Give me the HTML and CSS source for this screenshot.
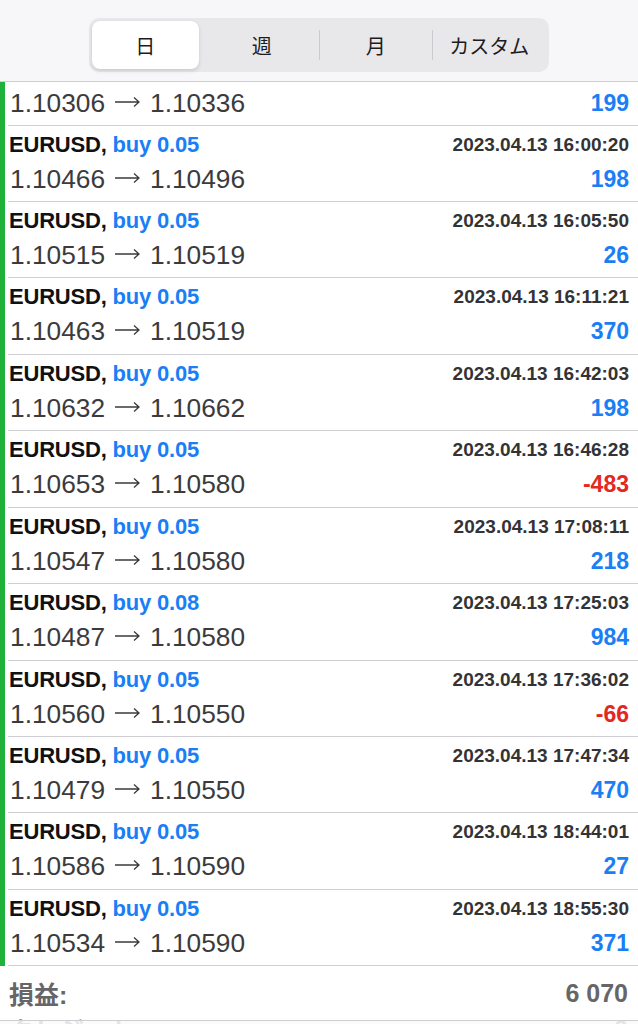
FILE: index.html
```html
<!DOCTYPE html>
<html lang="ja">
<head>
<meta charset="utf-8">
<link rel="stylesheet" href="styles.css">
</head>
<body>
<header class="top">
  <div class="seg">
    <div class="seg-item active">日</div>
    <div class="seg-item">週</div>
    <div class="seg-item sep">月</div>
    <div class="seg-item sep">カスタム</div>
  </div>
</header>
<ul class="deals">
  <li class="deal partial">
    <div class="line2"><span class="price">1.10306<svg class="arr" viewBox="0 0 25 12" width="25" height="12"><path d="M0 6H24M19 1.5L24 6L19 10.5"/></svg>1.10336</span><span class="pl">199</span></div>
  </li>
  <li class="deal">
    <div class="line1"><span class="sym">EURUSD, <span class="side">buy 0.05</span></span><span class="time">2023.04.13 16:00:20</span></div>
    <div class="line2"><span class="price">1.10466<svg class="arr" viewBox="0 0 25 12" width="25" height="12"><path d="M0 6H24M19 1.5L24 6L19 10.5"/></svg>1.10496</span><span class="pl">198</span></div>
  </li>
  <li class="deal">
    <div class="line1"><span class="sym">EURUSD, <span class="side">buy 0.05</span></span><span class="time">2023.04.13 16:05:50</span></div>
    <div class="line2"><span class="price">1.10515<svg class="arr" viewBox="0 0 25 12" width="25" height="12"><path d="M0 6H24M19 1.5L24 6L19 10.5"/></svg>1.10519</span><span class="pl">26</span></div>
  </li>
  <li class="deal">
    <div class="line1"><span class="sym">EURUSD, <span class="side">buy 0.05</span></span><span class="time">2023.04.13 16:11:21</span></div>
    <div class="line2"><span class="price">1.10463<svg class="arr" viewBox="0 0 25 12" width="25" height="12"><path d="M0 6H24M19 1.5L24 6L19 10.5"/></svg>1.10519</span><span class="pl">370</span></div>
  </li>
  <li class="deal">
    <div class="line1"><span class="sym">EURUSD, <span class="side">buy 0.05</span></span><span class="time">2023.04.13 16:42:03</span></div>
    <div class="line2"><span class="price">1.10632<svg class="arr" viewBox="0 0 25 12" width="25" height="12"><path d="M0 6H24M19 1.5L24 6L19 10.5"/></svg>1.10662</span><span class="pl">198</span></div>
  </li>
  <li class="deal">
    <div class="line1"><span class="sym">EURUSD, <span class="side">buy 0.05</span></span><span class="time">2023.04.13 16:46:28</span></div>
    <div class="line2"><span class="price">1.10653<svg class="arr" viewBox="0 0 25 12" width="25" height="12"><path d="M0 6H24M19 1.5L24 6L19 10.5"/></svg>1.10580</span><span class="pl loss">-483</span></div>
  </li>
  <li class="deal">
    <div class="line1"><span class="sym">EURUSD, <span class="side">buy 0.05</span></span><span class="time">2023.04.13 17:08:11</span></div>
    <div class="line2"><span class="price">1.10547<svg class="arr" viewBox="0 0 25 12" width="25" height="12"><path d="M0 6H24M19 1.5L24 6L19 10.5"/></svg>1.10580</span><span class="pl">218</span></div>
  </li>
  <li class="deal">
    <div class="line1"><span class="sym">EURUSD, <span class="side">buy 0.08</span></span><span class="time">2023.04.13 17:25:03</span></div>
    <div class="line2"><span class="price">1.10487<svg class="arr" viewBox="0 0 25 12" width="25" height="12"><path d="M0 6H24M19 1.5L24 6L19 10.5"/></svg>1.10580</span><span class="pl">984</span></div>
  </li>
  <li class="deal">
    <div class="line1"><span class="sym">EURUSD, <span class="side">buy 0.05</span></span><span class="time">2023.04.13 17:36:02</span></div>
    <div class="line2"><span class="price">1.10560<svg class="arr" viewBox="0 0 25 12" width="25" height="12"><path d="M0 6H24M19 1.5L24 6L19 10.5"/></svg>1.10550</span><span class="pl loss">-66</span></div>
  </li>
  <li class="deal">
    <div class="line1"><span class="sym">EURUSD, <span class="side">buy 0.05</span></span><span class="time">2023.04.13 17:47:34</span></div>
    <div class="line2"><span class="price">1.10479<svg class="arr" viewBox="0 0 25 12" width="25" height="12"><path d="M0 6H24M19 1.5L24 6L19 10.5"/></svg>1.10550</span><span class="pl">470</span></div>
  </li>
  <li class="deal">
    <div class="line1"><span class="sym">EURUSD, <span class="side">buy 0.05</span></span><span class="time">2023.04.13 18:44:01</span></div>
    <div class="line2"><span class="price">1.10586<svg class="arr" viewBox="0 0 25 12" width="25" height="12"><path d="M0 6H24M19 1.5L24 6L19 10.5"/></svg>1.10590</span><span class="pl">27</span></div>
  </li>
  <li class="deal">
    <div class="line1"><span class="sym">EURUSD, <span class="side">buy 0.05</span></span><span class="time">2023.04.13 18:55:30</span></div>
    <div class="line2"><span class="price">1.10534<svg class="arr" viewBox="0 0 25 12" width="25" height="12"><path d="M0 6H24M19 1.5L24 6L19 10.5"/></svg>1.10590</span><span class="pl">371</span></div>
  </li>
</ul>
<section class="summary">
  <div class="sum-row"><span>損益:</span><span>6 070</span></div>
  <div class="sum-row"><span>クレジット:</span><span>0</span></div>
</section>
<div class="tabbar"></div>
</body>
</html>
```

FILE: styles.css
```css
* { box-sizing: border-box; }
html, body {
  margin: 0;
  padding: 0;
  background: #ffffff;
  height: 1024px;
  overflow: hidden;
}
body {
  font-family: "Liberation Sans", Arial, "Noto Sans CJK JP", sans-serif;
  color: #3a3a3c;
}
.top {
  height: 82px;
  background: #f7f7f9;
  border-bottom: 1px solid #cfcfd3;
  padding-top: 18px;
  display: flex;
  justify-content: center;
}
.seg {
  width: 460px;
  height: 54px;
  background: #e8e8eb;
  border-radius: 10px;
  padding: 3px;
  display: grid;
  grid-template-columns: repeat(4, 1fr);
  margin-left: -1px;
}
.seg-item {
  position: relative;
  display: flex;
  align-items: center;
  justify-content: center;
  font-family: "Noto Sans CJK JP", sans-serif;
  font-size: 20px;
  color: #1c1c1e;
}
.seg-item.active {
  background: #ffffff;
  border-radius: 8px;
  box-shadow: 0 2px 4px rgba(0,0,0,0.12), 0 0 1px rgba(0,0,0,0.1);
  margin-right: 6px;
}
.seg-item.sep {
  border-left: 1px solid #cbcbcf;
  margin: 9px 0;
}
.deals {
  list-style: none;
  margin: 0;
  padding: 0;
}
.deal {
  height: 76.45px;
  border-left: 5px solid #20b13a;
  padding: 3px 9px 0 4px;
  position: relative;
}
.deal::after {
  content: "";
  position: absolute;
  left: 3px;
  right: 0;
  bottom: 0;
  height: 1px;
  background: #cfcfd3;
}
.deal.partial {
  height: 43.5px;
  padding-top: 3px;
}
.line1, .line2 {
  display: flex;
  justify-content: space-between;
  align-items: center;
}
.line1 { height: 32px; }
.line2 { height: 37px; }
.sym {
  font-size: 22px;
  font-weight: bold;
  color: #111111;
  letter-spacing: -0.2px;
}
.side { color: #1a7ef5; }
.time {
  font-size: 19px;
  font-weight: bold;
  color: #333336;
}
.price {
  font-size: 26.3px;
  color: #3b3b3d;
  padding-left: 1px;
}
.arr {
  margin: 0 10px;
  vertical-align: 4px;
  fill: none;
  stroke: #3b3b3d;
  stroke-width: 1.3;
}
.pl {
  font-size: 23px;
  font-weight: bold;
  color: #1a7ef5;
}
.pl.loss { color: #e2281f; }
.summary {
  padding: 9px 10px 0 9px;
}
.sum-row {
  display: flex;
  justify-content: space-between;
  align-items: center;
  height: 36px;
  font-size: 25px;
  font-weight: bold;
  color: #666668;
}
.tabbar {
  position: fixed;
  left: 0;
  right: 0;
  top: 1020px;
  height: 10px;
  background: rgba(250,250,250,0.85);
  border-top: 1px solid #cfcfd3;
}
```
